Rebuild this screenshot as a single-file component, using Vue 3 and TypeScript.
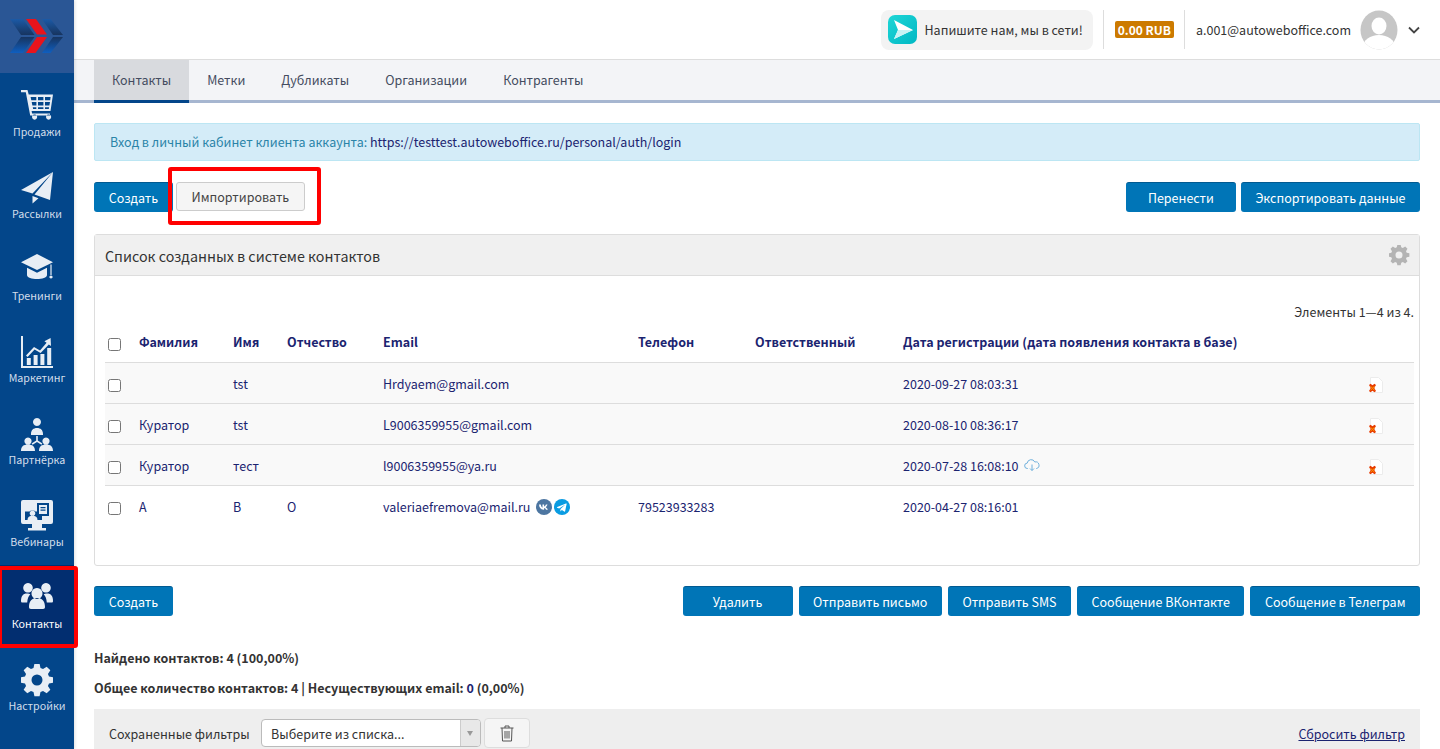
<script setup lang="ts">
// builds a toothed wheel with a round hole, used by sidebar and panel settings icons
const gearPath = (c: number, outer: number, inner: number, hole: number, teeth = 8) => {
  const pts: string[] = []
  const step = (Math.PI * 2) / teeth
  for (let i = 0; i < teeth; i++) {
    const a = i * step - Math.PI / 2
    const p = (r: number, d: number) => `${(c + r * Math.cos(a + d)).toFixed(2)} ${(c + r * Math.sin(a + d)).toFixed(2)}`
    pts.push(p(inner, -step * 0.36), p(outer, -step * 0.2), p(outer, step * 0.2), p(inner, step * 0.36))
  }
  return `M${pts.join('L')}Z M${c - hole} ${c}a${hole} ${hole} 0 1 0 ${hole * 2} 0a${hole} ${hole} 0 1 0 ${-hole * 2} 0Z`
}

const navItems = [
  {
    label: 'Продажи',
    d: 'M0 0h6.5l1.2 4.5H32L29.5 21H10.6l.5 2.4H29v2H9.2L4.8 2.2H0z M9.6 7l.7 3.2h5V7z M17 7v3.2h5.4V7z M24 7v3.2h5.2l.4-3.2z M10.7 12l.7 3.4h4V12z M17 12v3.4h5.4V12z M24 12v3.4h4.4l.6-3.4z M11.8 17.2l.3 1.8h3.2v-1.8z M17 17.2V19h5.4v-1.8z M24 17.2V19h3.8l.3-1.8z M11 27a2.6 2.6 0 1 1 0 .01z M25 27a2.6 2.6 0 1 1 0 .01z',
  },
  {
    label: 'Рассылки',
    d: 'M32 0 0 18l11.5 3.6z M32 0 13.5 22.5 29 28z M11.5 24v7.5l6-5.2z',
  },
  {
    label: 'Тренинги',
    d: 'M16 0 32 8.2 16 16 0 8.2z M6 13.8l10 5 10-5V21c0 2.6-5 4-10 4s-10-1.4-10-4z M29.4 10.4h1.2V21h-1.2z M30 21.4a1.6 1.6 0 1 1-.01 0z',
  },
  {
    label: 'Маркетинг',
    d: 'M0 0h2v30h30v2H0z M5.8 22h4v7h-4z M12.6 19h4v10h-4z M19.4 18h4v11h-4z M26.2 12h4v17h-4z M5 19.5l8-8.5 6 3.4 6.6-7.6-2.2-1.6L29.6 2l.4 8-2.2-1.6L19.6 17l-6-3.4-7 7.4z',
  },
  {
    label: 'Партнёрка',
    d: 'M16 0a4 4 0 1 1-.01 0z M10 16c0-4 2.5-6 6-6s6 2 6 6v1H10z M15.2 18h1.6v4.4l4.6 3-1 1.4L16 24l-4.4 2.8-1-1.4 4.6-3z M7 19.5a3.6 3.6 0 1 1-.01 0z M0 33c0-4.500 2.500-6.500 7-6.500s7 2 7 6.500z M25 19.500a3.600 3.600 0 1 1-.01 0z M18 33c0-4.500 2.500-6.500 7-6.500s7 2 7 6.500z',
  },
  {
    label: 'Вебинары',
    d: 'M2 0h28a2 2 0 0 1 2 2v20a2 2 0 0 1-2 2H2a2 2 0 0 1-2-2V2a2 2 0 0 1 2-2z M16 3v8.500h-1.500a5 5 0 0 0-6 0H4V20h17v-4h7V3z M18 5h8v9h-8z M19.500 7h5v1.300h-5z M19.500 9.500h5v1.300h-5z M11.500 10.500a2.800 2.800 0 1 1-.01 0z M6.500 20c0-3 2-4.300 5-4.300s5 1.300 5 4.300z M11 24h10v4h4v2.500H7V28h4z',
  },
  {
    label: 'Контакты',
    active: true,
    d: 'M7 1a4.800 4.800 0 1 1-.01 0z M25 1a4.800 4.800 0 1 1-.01 0z M16 6a5.500 5.500 0 1 1-.01 0z M0 19c0-5 2-7.500 6-7.500 1.500 0 2.500.4 3.300 1-1.700 1.600-2.800 4-3.100 8H1.500C.5 20.500 0 20 0 19z M32 19c0-5-2-7.500-6-7.500-1.500 0-2.500.4-3.300 1 1.700 1.600 2.800 4 3.100 8h4.700c1 0 1.500-.5 1.500-1.500z M8 25c0-6 3-9 8-9s8 3 8 9c0 1-.6 2-2 2H10c-1.400 0-2-1-2-2z',
  },
  { label: 'Настройки', d: gearPath(16, 16.5, 12.5, 5.5) },
]

const tabs = ['Контакты', 'Метки', 'Дубликаты', 'Организации', 'Контрагенты']
const panelGear = gearPath(10, 10.5, 8, 3.5)

const columns = ['Фамилия', 'Имя', 'Отчество', 'Email', 'Телефон', 'Ответственный', 'Дата регистрации (дата появления контакта в базе)']

const rows = [
  { last: '', first: 'tst', middle: '', email: 'Hrdyaem@gmail.com', phone: '', date: '2020-09-27 08:03:31', removable: true },
  { last: 'Куратор', first: 'tst', middle: '', email: 'L9006359955@gmail.com', phone: '', date: '2020-08-10 08:36:17', removable: true },
  { last: 'Куратор', first: 'тест', middle: '', email: 'l9006359955@ya.ru', phone: '', date: '2020-07-28 16:08:10', removable: true, cloud: true },
  { last: 'А', first: 'В', middle: 'О', email: 'valeriaefremova@mail.ru', phone: '79523933283', date: '2020-04-27 08:16:01', social: true },
]

const bottomActions = ['Удалить', 'Отправить письмо', 'Отправить SMS', 'Сообщение ВКонтакте', 'Сообщение в Телеграм']
</script>

<template>
  <div class="layout">
    <aside class="sidebar">
      <div class="logo">
        <svg width="54" height="34" viewBox="0 0 54 34">
          <defs>
            <linearGradient id="blueUp" x1="0" y1="0" x2="0" y2="1">
              <stop offset="0" stop-color="#1c5aa6" />
              <stop offset="1" stop-color="#17345f" />
            </linearGradient>
            <linearGradient id="blueDown" x1="0" y1="0" x2="0" y2="1">
              <stop offset="0" stop-color="#17345f" />
              <stop offset="1" stop-color="#0f5fc0" />
            </linearGradient>
          </defs>
          <path d="M0 0h13l11.500 16H11z" fill="url(#blueUp)" />
          <path d="M0 34h13l11.500-16H11z" fill="url(#blueDown)" />
          <path d="M16 0h10l11 15.500H27z" fill="#e8141c" />
          <path d="M16 34h9.500L37 18H27z" fill="#e8141c" />
          <path d="M32 0h8.500L53 16H43z" fill="url(#blueUp)" />
          <path d="M32 34h8.500L53 18H43z" fill="url(#blueDown)" />
        </svg>
      </div>
      <nav class="nav">
        <a v-for="item in navItems" :key="item.label" class="nav-item" :class="{ active: item.active }">
          <svg class="nav-icon" width="32" height="34" viewBox="0 0 32 34">
            <path :d="item.d" fill-rule="evenodd" />
          </svg>
          <span>{{ item.label }}</span>
        </a>
      </nav>
      <div class="mark mark-nav"></div>
    </aside>

    <div class="main">
      <header class="topbar">
        <div class="chat">
          <svg width="29" height="29" viewBox="0 0 29 29">
            <defs>
              <linearGradient id="chatBg" x1="0" y1="0" x2="1" y2="1">
                <stop offset="0" stop-color="#1fd6d6" />
                <stop offset="1" stop-color="#00b8c4" />
              </linearGradient>
            </defs>
            <rect width="29" height="29" rx="7" fill="url(#chatBg)" />
            <path d="M6 5l19 10-19 9 4-9z" fill="#fff" />
            <path d="M10 15h15L6 24z" fill="#c8f3f4" />
          </svg>
          <span>Напишите нам, мы в сети!</span>
        </div>
        <div class="divider"></div>
        <span class="balance">0.00 RUB</span>
        <div class="divider"></div>
        <span class="user-email">a.001@autoweboffice.com</span>
        <svg class="avatar" width="38" height="40" viewBox="0 0 38 40">
          <defs>
            <clipPath id="avatarClip"><ellipse cx="19" cy="20" rx="18.500" ry="19.500" /></clipPath>
          </defs>
          <g clip-path="url(#avatarClip)">
            <rect width="38" height="40" fill="#c6c6c6" />
            <ellipse cx="19" cy="16" rx="7.500" ry="8.500" fill="#fff" />
            <ellipse cx="19" cy="37" rx="16" ry="12" fill="#fff" />
          </g>
        </svg>
        <svg class="caret" width="12" height="8" viewBox="0 0 12 8">
          <path d="M1 1.500l5 5 5-5" fill="none" stroke="#444" stroke-width="1.800" />
        </svg>
      </header>

      <div class="tabs">
        <a v-for="(tab, i) in tabs" :key="tab" class="tab" :class="{ current: i === 0 }">{{ tab }}</a>
      </div>

      <main class="content">
        <div class="alert">
          Вход в личный кабинет клиента аккаунта:
          <a>https://testtest.autoweboffice.ru/personal/auth/login</a>
        </div>

        <div class="actions">
          <div class="group">
            <button class="btn btn-create">Создать</button>
            <div class="import-wrap">
              <button class="btn btn-light">Импортировать</button>
              <div class="mark mark-import"></div>
            </div>
          </div>
          <div class="group">
            <button class="btn btn-wide">Перенести</button>
            <button class="btn">Экспортировать данные</button>
          </div>
        </div>

        <section class="panel">
          <div class="panel-head">
            <h3>Список созданных в системе контактов</h3>
            <svg width="21" height="21" viewBox="0 0 21 21">
              <path :d="panelGear" fill="#b4b4b4" fill-rule="evenodd" />
            </svg>
          </div>
          <div class="panel-body">
            <p class="summary">Элементы 1—4 из 4.</p>
            <table class="grid">
              <colgroup>
                <col style="width: 34px" />
                <col style="width: 94px" />
                <col style="width: 54px" />
                <col style="width: 96px" />
                <col style="width: 255px" />
                <col style="width: 117px" />
                <col style="width: 148px" />
                <col style="width: 464px" />
                <col style="width: 47px" />
              </colgroup>
              <thead>
                <tr>
                  <th><input type="checkbox" /></th>
                  <th v-for="col in columns" :key="col">{{ col }}</th>
                  <th></th>
                </tr>
              </thead>
              <tbody>
                <tr v-for="row in rows" :key="row.email" :class="{ shaded: row.removable }">
                  <td><input type="checkbox" /></td>
                  <td>{{ row.last }}</td>
                  <td>{{ row.first }}</td>
                  <td>{{ row.middle }}</td>
                  <td>
                    <span class="cell-inline">
                      {{ row.email }}
                      <template v-if="row.social">
                        <svg class="social" width="16" height="16" viewBox="0 0 16 16">
                          <circle cx="8" cy="8" r="8" fill="#4d76a1" />
                          <path d="M3 5.500h1.800c.3 1.800 1 3 1.700 3.200V5.500h1.600v1.900c.8-.1 1.500-1 1.800-1.900h1.600c-.3 1.200-1.100 2.200-1.800 2.700.8.400 1.700 1.200 2.100 2.500h-1.800c-.3-.9-1-1.600-1.900-1.700v1.700h-.4C4.900 10.700 3.200 8.700 3 5.500z" fill="#fff" />
                        </svg>
                        <svg class="social" width="16" height="16" viewBox="0 0 16 16">
                          <circle cx="8" cy="8" r="8" fill="#0a9ce2" />
                          <path d="M3.200 7.900l8.800-3.500c.4-.1.800.1.600.8l-1.500 7c-.1.500-.4.600-.9.400L7.900 11l-1.100 1.100c-.2.200-.3.300-.5.300l.2-2.400 4.300-3.900c.2-.2 0-.3-.3-.1L5.200 9.400 3.100 8.700c-.4-.2-.4-.5.100-.8z" fill="#fff" />
                        </svg>
                      </template>
                    </span>
                  </td>
                  <td>{{ row.phone }}</td>
                  <td></td>
                  <td>
                    <span class="cell-inline">
                      {{ row.date }}
                      <svg v-if="row.cloud" class="cloud" width="16" height="12" viewBox="0 0 16 12">
                        <path d="M4 9.500H3.500a2.700 2.700 0 0 1-.3-5.400A4 4 0 0 1 10.800 3a3.200 3.200 0 0 1 1.700 6.500H12" fill="none" stroke="#6fb0dc" stroke-width="1" />
                        <path d="M8 5.500v6M6 9.500l2 2 2-2" fill="none" stroke="#6fb0dc" stroke-width="1" />
                      </svg>
                    </span>
                  </td>
                  <td>
                    <svg v-if="row.removable" class="remove" width="17" height="17" viewBox="0 0 17 17">
                      <path d="M3.500.5h8l4 4v11h-12z" fill="#fff" stroke="#ececec" />
                      <path d="M2 8l1.500-1.200 2 1.500 2-1.500L9 8 7.300 11 9 14l-1.500 1.200-2-1.500-2 1.500L2 14l1.700-3z" fill="#e63a00" />
                      <path d="M3.500 9.500l2 1.500 2-1.500M3.500 13l2-1.500 2 1.500" fill="none" stroke="#ffa000" />
                    </svg>
                  </td>
                </tr>
              </tbody>
            </table>
          </div>
        </section>

        <div class="actions actions-bottom">
          <button class="btn btn-create">Создать</button>
          <div class="group">
            <button
              v-for="(action, i) in bottomActions"
              :key="action"
              class="btn"
              :class="{ 'btn-wide': i === 0 }"
            >{{ action }}</button>
          </div>
        </div>

        <p class="stat stat-found">Найдено контактов: 4 (100,00%)</p>
        <p class="stat stat-total">
          Общее количество контактов: 4 | Несуществующих email: <a>0</a> (0,00%)
        </p>

        <div class="filters">
          <span class="filters-label">Сохраненные фильтры</span>
          <div class="select">
            <span>Выберите из списка...</span>
            <i class="select-arrow"></i>
          </div>
          <button class="trash" aria-label="Удалить фильтр">
            <svg width="14" height="17" viewBox="0 0 14 17">
              <path d="M.5 3h13M5 3V1h4v2M2 3l.5 13h9L12 3M5 6v7.500M7 6v7.500M9 6v7.500" fill="none" stroke="#555" stroke-width="1" />
            </svg>
          </button>
          <a class="reset">Сбросить фильтр</a>
        </div>
      </main>
    </div>
  </div>
</template>

<style>
html,
body {
  height: 100%;
  overflow: hidden;
}
</style>

<style scoped>
.layout {
  display: flex;
  height: 749px;
  overflow: hidden;
  font-family: "Noto Sans CJK SC", "Noto Sans", sans-serif;
  font-size: 12.5px;
  color: #333;
  background: #fff;
}

/* Sidebar */
.sidebar {
  position: relative;
  z-index: 2;
  flex: 0 0 74px;
  background: #03468a;
  box-shadow: 1px 0 3px rgba(0, 0, 0, 0.12);
}
.logo {
  height: 73px;
  padding: 19px 0 0 10px;
  box-sizing: border-box;
  background: #2a5695;
}
.nav-item {
  display: flex;
  flex-direction: column;
  align-items: center;
  height: 82px;
  padding-top: 17px;
  box-sizing: border-box;
  font-size: 10.7px;
  line-height: 15px;
  color: #d3deeb;
}
.nav-item.active {
  color: #fff;
  background: #022e70;
}
.nav-icon {
  display: block;
  fill: #e8eef5;
}
.mark {
  position: absolute;
  border: 4px solid #f00;
  border-radius: 3px;
  box-sizing: border-box;
  pointer-events: none;
}
.mark-nav {
  left: -2px;
  top: 566px;
  width: 80px;
  height: 82px;
}

/* Header */
.main {
  flex: 1;
  min-width: 0;
}
.topbar {
  display: flex;
  align-items: center;
  justify-content: flex-end;
  height: 60px;
  padding-right: 20px;
  box-sizing: border-box;
  border-bottom: 1px solid #ddd;
}
.chat {
  display: flex;
  align-items: center;
  gap: 8px;
  height: 40px;
  padding: 0 10px 0 7px;
  background: #f3f3f3;
  border-radius: 8px;
}
.divider {
  width: 1px;
  height: 39px;
  margin: 0 10.5px;
  background: #ddd;
}
.balance {
  padding: 0 3px;
  font-size: 12px;
  font-weight: 700;
  line-height: 17px;
  color: #fff;
  background: #cc7a00;
  border-radius: 2px;
}
.avatar {
  margin-left: 9px;
}
.caret {
  margin-left: 10px;
}

/* Tabs */
.tabs {
  display: flex;
  height: 43px;
  padding-left: 20px;
  background: #f3f4f7;
  border-bottom: 3px solid #a6b6d0;
  box-sizing: border-box;
}
.tab {
  height: 43px;
  padding: 0 18px;
  box-sizing: border-box;
  line-height: 40px;
  color: #444c60;
}
.tab.current {
  background: #d8dade;
  border-bottom: 3px solid #03468a;
}

/* Content */
.content {
  padding: 20px 20px 0;
}
.alert {
  height: 38px;
  padding-left: 15px;
  box-sizing: border-box;
  line-height: 35px;
  color: #2b84a8;
  background: #d4ecf8;
  border: 1px solid #bce6f3;
  border-radius: 2px;
}
.alert a,
.stat a {
  color: #1b2470;
}
.actions {
  display: flex;
  justify-content: space-between;
  margin-top: 21px;
}
.group {
  display: flex;
  gap: 5px;
}
.actions-bottom {
  margin-top: 20px;
}
.actions-bottom .group {
  gap: 6px;
}
.btn {
  height: 30px;
  padding: 0 14.5px;
  font: inherit;
  color: #fff;
  background: #0075b7;
  border: 0;
  border-top: 1px solid #015a91;
  border-radius: 3px;
  white-space: nowrap;
}
.btn-wide {
  min-width: 110px;
}
.btn-create {
  min-width: 79px;
}
.import-wrap {
  position: relative;
  margin-left: -2px;
}
.btn-light {
  height: 29px;
  color: #444;
  background: #f5f5f5;
  border: 1px solid #ccc;
}
.mark-import {
  left: -8px;
  top: -15px;
  width: 153px;
  height: 58px;
}

/* Panel */
.panel {
  margin-top: 22px;
  height: 332px;
  box-sizing: border-box;
  border: 1px solid #ddd;
  border-radius: 3px;
}
.panel-head {
  display: flex;
  align-items: center;
  justify-content: space-between;
  height: 40px;
  padding: 0 9px 0 10px;
  background: #f0f0f0;
  border-bottom: 1px solid #ddd;
}
.panel-head h3 {
  margin: 0;
  font-size: 14.3px;
  font-weight: 400;
  color: #333;
}
.panel-body {
  padding: 0 5px 0 10px;
}
.summary {
  margin: 0;
  height: 19px;
  padding-top: 26px;
  line-height: 20px;
  text-align: right;
}
.grid {
  width: 1309px;
  table-layout: fixed;
  border-collapse: collapse;
  color: #1b2470;
}
.grid th {
  height: 41px;
  padding: 0;
  font-weight: 700;
  text-align: left;
  white-space: nowrap;
  color: #1b2470;
}
.grid td {
  height: 40px;
  padding: 0;
  border-top: 1px solid #ddd;
}
.grid th:first-child,
.grid td:first-child {
  padding-left: 3px;
}
.grid tr.shaded td {
  background: #f9f9f9;
}
.grid input {
  display: block;
  width: 13px;
  height: 13px;
  margin: 5px 0 0;
}
.cell-inline {
  display: inline-flex;
  align-items: center;
  white-space: pre-wrap;
}
.social {
  margin-left: 3px;
  margin-top: 2px;
}
.social + .social {
  margin-left: 2px;
}
.cloud {
  margin-left: 3px;
}
.remove {
  display: block;
  margin: 4px 0 0 0;
}

/* Footer blocks */
.stat {
  margin: 0;
  font-weight: 700;
  line-height: 18px;
}
.stat-found {
  margin-top: 33px;
}
.stat-total {
  margin-top: 12px;
}
.filters {
  display: flex;
  align-items: center;
  height: 48px;
  margin-top: 12px;
  padding: 0 15px;
  background: #eee;
}
.filters-label {
  width: 152px;
}
.select {
  display: flex;
  align-items: center;
  justify-content: space-between;
  width: 220px;
  height: 28px;
  padding-left: 9px;
  box-sizing: border-box;
  background: #fff;
  border: 1px solid #bbb;
  border-radius: 4px;
}
.select-arrow {
  position: relative;
  width: 19px;
  height: 26px;
  background: #e8e8e8;
  border-left: 1px solid #ccc;
  border-radius: 0 3px 3px 0;
}
.select-arrow::after {
  content: "";
  position: absolute;
  left: 6px;
  top: 11px;
  border: 3.5px solid transparent;
  border-top: 5px solid #999;
}
.trash {
  display: flex;
  align-items: center;
  justify-content: center;
  width: 46px;
  height: 30px;
  margin-left: 3px;
  background: #f5f5f5;
  border: 1px solid #ddd;
  border-radius: 4px;
}
.reset {
  margin-left: auto;
  color: #1b2470;
  text-decoration: underline;
}
</style>
